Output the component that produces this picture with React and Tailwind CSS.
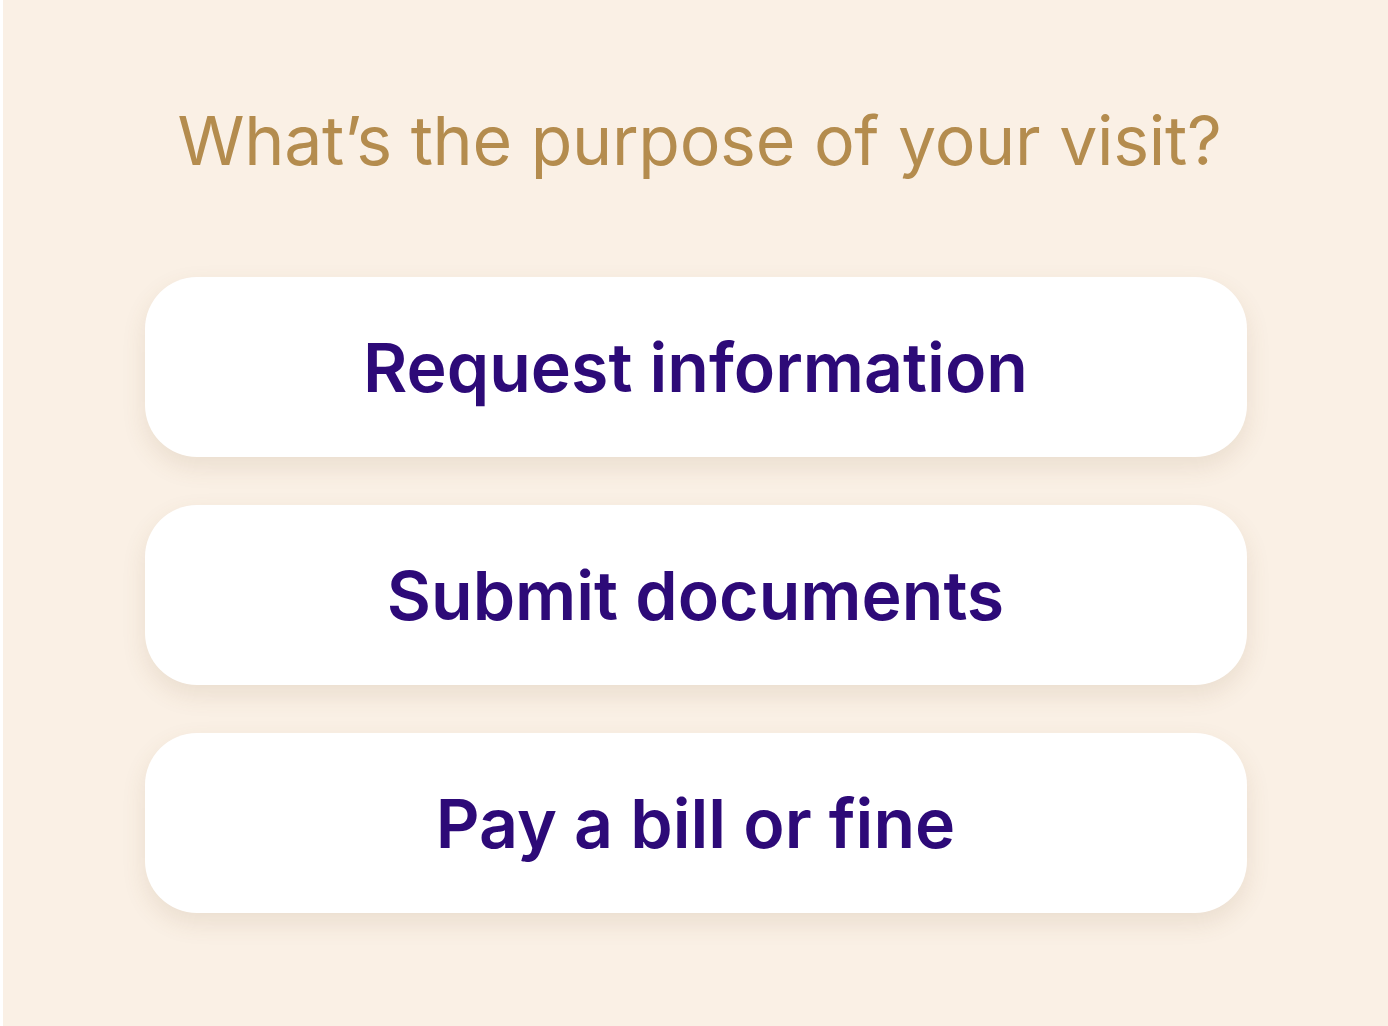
export default function App() {
  const items = ["Request information", "Submit documents", "Pay a bill or fine"];
  return (
    <div
      className="w-[1388px] h-[1026px] bg-[#faf0e5] border-l-[3px] border-white flex flex-col items-center overflow-hidden"
      style={{ fontFamily: "Inter, 'Noto Sans', sans-serif" }}
    >
      <h1 className="mt-[106px] ml-[8px] text-[68px] leading-[68px] font-normal text-[#b48c4e] tracking-[-0.3px]">
        What’s the purpose of your visit?
      </h1>
      <div className="mt-[103px] flex flex-col gap-[48px]">
        {items.map((t) => (
          <button
            key={t}
            className="w-[1102px] h-[180px] bg-white rounded-[52px] shadow-[0_10px_24px_rgba(120,90,50,0.12)] flex items-center justify-center text-[68px] font-semibold text-[#2d0a78]"
          >
            {t}
          </button>
        ))}
      </div>
    </div>
  );
}
